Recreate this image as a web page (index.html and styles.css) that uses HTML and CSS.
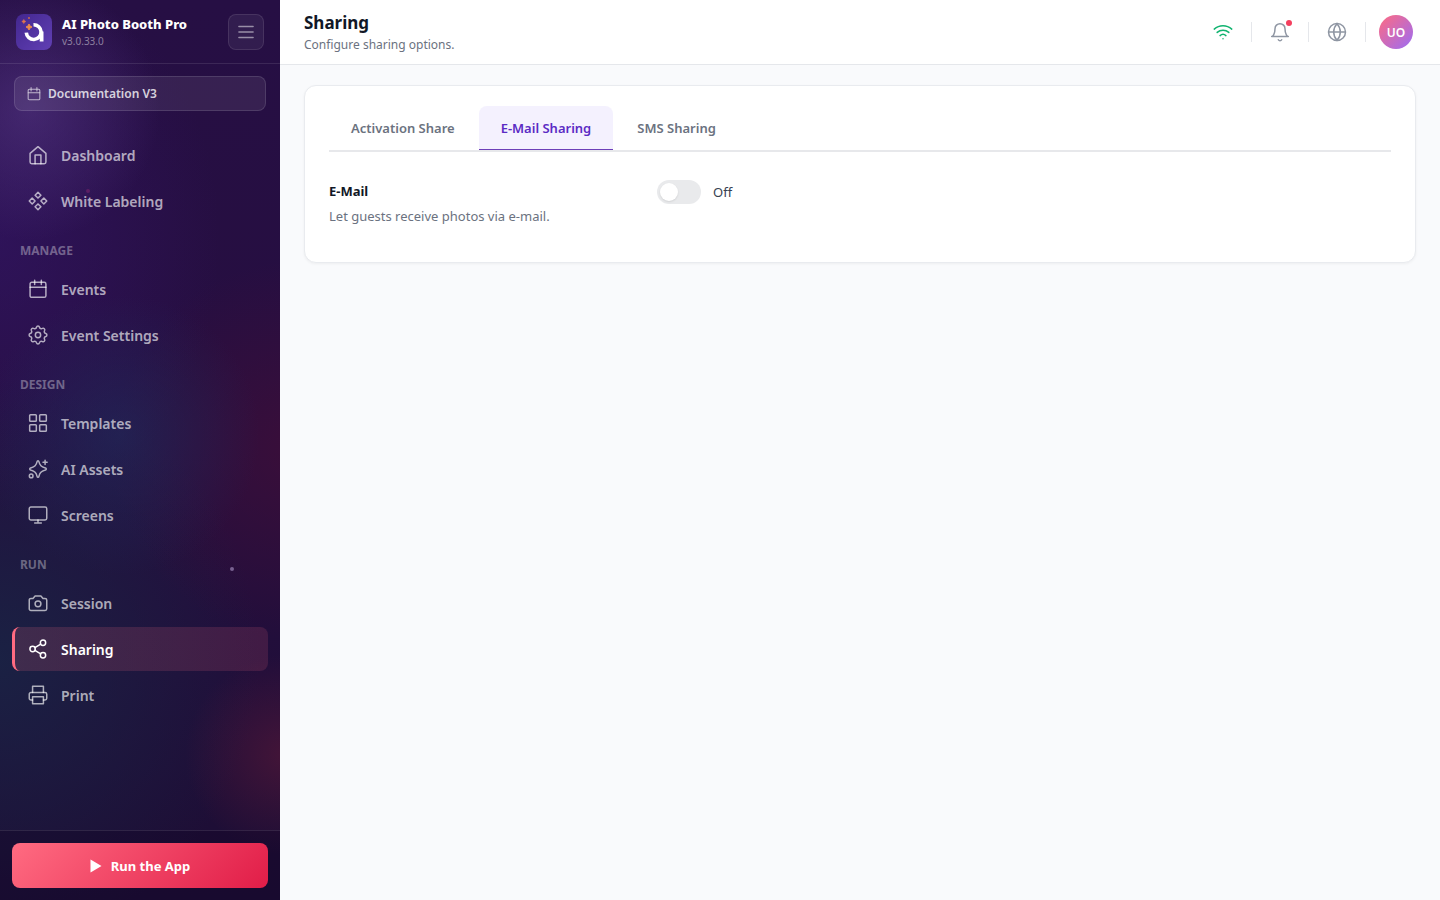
FILE: index.html
```html
<!DOCTYPE html>
<html lang="en">
<head>
    <meta charset="UTF-8">
    <meta name="viewport" content="width=device-width, initial-scale=1.0">
    <title>Sharing - AI Photo Booth Pro</title>
    <link rel="stylesheet" href="styles.css">
</head>
<body>
    <aside class="sidebar">
        <span class="particle particle-pink"></span>
        <span class="particle particle-white"></span>

        <div class="brand">
            <svg class="brand-logo" viewBox="0 0 36 36" aria-hidden="true">
                <defs>
                    <linearGradient id="logo-bg" x1="0" y1="0" x2="1" y2="1">
                        <stop offset="0" stop-color="#43278f"/>
                        <stop offset="1" stop-color="#6140b4"/>
                    </linearGradient>
                </defs>
                <rect width="36" height="36" rx="8" fill="url(#logo-bg)"/>
                <path d="M17.500 10.700A7.400 7.400 0 1 1 10.300 18.600" fill="none" stroke="#fff" stroke-width="3.600"/>
                <path d="M25.600 17.500V27.500" fill="none" stroke="#fff" stroke-width="3.800"/>
                <path d="M13 10l1 2 2 1-2 1-1 2-1-2-2-1 2-1z" fill="#ec8a4c" stroke="#ec8a4c"/>
                <path d="M7.800 5.500l.700 1.300 1.300.700-1.300.700-.700 1.300-.700-1.300-1.300-.700 1.300-.700z" fill="#e0764c" stroke="#e0764c" stroke-width=".6"/>
                <circle cx="13" cy="4" r="1.100" fill="#c0654f"/>
            </svg>
            <div class="brand-text">
                <div class="brand-name">AI Photo Booth Pro</div>
                <div class="brand-version">v3.0.33.0</div>
            </div>
            <button class="menu-btn" type="button" aria-label="Toggle menu">
                <svg class="icon" viewBox="0 0 24 24"><path d="M3.500 5.500h17M3.500 12h17M3.500 18.500h17"/></svg>
            </button>
        </div>

        <button class="event-chip" type="button">
            <svg class="icon" viewBox="0 0 24 24"><rect x="2" y="4" width="20" height="18" rx="2"/><path d="M7 1v6M17 1v6M2 10h20"/></svg>
            Documentation V3
        </button>

        <nav class="nav">
            <a class="nav-item" href="#">
                <svg class="icon" viewBox="0 0 24 24"><path d="M2.500 10V20.500a2 2 0 0 0 2 2h15a2 2 0 0 0 2-2V10L12 2z"/><path d="M8.500 22.500V12h7v10.500"/></svg>
                Dashboard
            </a>
            <a class="nav-item" href="#">
                <svg class="icon" viewBox="0 0 24 24"><path d="M12 1.500l3.500 3.500L12 8.500 8.500 5zM12 15.500l3.500 3.500-3.500 3.500L8.500 19zM5 8.500L8.500 12 5 15.500 1.500 12zM19 8.500l3.500 3.500-3.500 3.500-3.500-3.500z"/></svg>
                White Labeling
            </a>

            <div class="nav-label">Manage</div>
            <a class="nav-item" href="#">
                <svg class="icon" viewBox="0 0 24 24"><rect x="2.500" y="4" width="19" height="18" rx="2"/><path d="M8 1.500v5M16 1.500v5M2.500 10h19"/></svg>
                Events
            </a>
            <a class="nav-item" href="#">
                <svg class="icon" viewBox="0 0 24 24"><circle cx="12" cy="12" r="3.200"/><path d="M10.190 2.670A1.900 1.900 0 0 1 13.810 2.670A2.300 2.300 0 0 0 17.310 4.120A1.900 1.900 0 0 1 19.880 6.690A2.300 2.300 0 0 0 21.330 10.190A1.900 1.900 0 0 1 21.330 13.810A2.300 2.300 0 0 0 19.880 17.310A1.900 1.900 0 0 1 17.310 19.880A2.300 2.300 0 0 0 13.810 21.330A1.900 1.900 0 0 1 10.190 21.330A2.300 2.300 0 0 0 6.690 19.880A1.900 1.900 0 0 1 4.120 17.310A2.300 2.300 0 0 0 2.670 13.810A1.900 1.900 0 0 1 2.670 10.190A2.300 2.300 0 0 0 4.120 6.690A1.900 1.900 0 0 1 6.690 4.120A2.300 2.300 0 0 0 10.190 2.670z"/></svg>
                Event Settings
            </a>

            <div class="nav-label">Design</div>
            <a class="nav-item" href="#">
                <svg class="icon" viewBox="0 0 24 24"><rect x="2" y="2" width="8" height="8" rx="1"/><rect x="14" y="2" width="8" height="8" rx="1"/><rect x="2" y="14" width="8" height="8" rx="1"/><rect x="14" y="14" width="8" height="8" rx="1"/></svg>
                Templates
            </a>
            <a class="nav-item" href="#">
                <svg class="icon" viewBox="0 0 24 24"><path d="M12 2c.800 0 1 .600 1.200 1.500.900 4.200 2.400 5.900 6.800 7 1 .300 2 .500 2 1.500s-1 1.200-2 1.500c-4.400 1.100-5.900 2.800-6.800 7-.200.900-.400 1.500-1.200 1.500s-1-.600-1.200-1.500c-.900-4.200-2.400-5.900-6.800-7-1-.300-2-.500-2-1.500s1-1.200 2-1.500c4.400-1.100 5.900-2.800 6.800-7C11 2.600 11.200 2 12 2z"/><path d="M20.500 1.500v5M18 4h5"/><circle cx="3.800" cy="20.300" r="2.200"/></svg>
                AI Assets
            </a>
            <a class="nav-item" href="#">
                <svg class="icon" viewBox="0 0 24 24"><rect x="1.500" y="2.500" width="21" height="15.500" rx="2"/><path d="M12 18v3.500M8 21.500h8"/></svg>
                Screens
            </a>

            <div class="nav-label">Run</div>
            <a class="nav-item" href="#">
                <svg class="icon" viewBox="0 0 24 24"><path d="M8.500 3.500h7L18 6.500h2.500a2 2 0 0 1 2 2V19a2 2 0 0 1-2 2h-17a2 2 0 0 1-2-2V8.500a2 2 0 0 1 2-2H6z"/><circle cx="12" cy="13" r="3.500"/></svg>
                Session
            </a>
            <a class="nav-item active" href="#">
                <svg class="icon" viewBox="0 0 24 24"><circle cx="18" cy="4.500" r="3.200"/><circle cx="5.500" cy="12" r="3.200"/><circle cx="18" cy="19.500" r="3.200"/><path d="M8.300 10.400l6.900-4.200M8.300 13.600l6.900 4.200"/></svg>
                Sharing
            </a>
            <a class="nav-item" href="#">
                <svg class="icon" viewBox="0 0 24 24"><path d="M5.500 9V1.500h13V9"/><path d="M5.500 18h-2a2 2 0 0 1-2-2v-5a2 2 0 0 1 2-2h17a2 2 0 0 1 2 2v5a2 2 0 0 1-2 2h-2"/><rect x="5.500" y="14" width="13" height="8.500"/></svg>
                Print
            </a>
        </nav>

        <div class="sidebar-footer">
            <button class="run-btn" type="button">
                <svg class="play" viewBox="0 0 12 14" aria-hidden="true"><path d="M.500.500l11 6.500-11 6.500z"/></svg>
                Run the App
            </button>
        </div>
    </aside>

    <div class="page">
        <header class="topbar">
            <div class="topbar-title">
                <h1>Sharing</h1>
                <p>Configure sharing options.</p>
            </div>
            <div class="topbar-actions">
                <button class="action wifi" type="button" aria-label="Connection">
                    <svg class="icon" viewBox="0 0 24 24"><path d="M1.500 8.500a15.500 15.500 0 0 1 21 0M5 12.500a10.500 10.500 0 0 1 14 0M8.500 16.300a5.300 5.300 0 0 1 7 0M12 20h.01"/></svg>
                </button>
                <span class="divider"></span>
                <button class="action" type="button" aria-label="Notifications">
                    <svg class="icon" viewBox="0 0 24 24"><path d="M18 8a6 6 0 0 0-12 0c0 7-3 9.500-4 9.500h20c-1 0-4-2.500-4-9.500M10 21.300a2.300 2.300 0 0 0 4 0"/></svg>
                    <span class="badge"></span>
                </button>
                <span class="divider"></span>
                <button class="action" type="button" aria-label="Language">
                    <svg class="icon" viewBox="0 0 24 24"><circle cx="12" cy="12" r="10.200"/><path d="M2 12h20M12 2c5.300 5.700 5.300 14.300 0 20M12 2c-5.300 5.700-5.300 14.300 0 20"/></svg>
                </button>
                <span class="divider"></span>
                <button class="avatar" type="button">UO</button>
            </div>
        </header>

        <main class="content">
            <section class="card">
                <div class="tabs" role="tablist">
                    <button class="tab" type="button" role="tab">Activation Share</button>
                    <button class="tab active" type="button" role="tab" aria-selected="true">E-Mail Sharing</button>
                    <button class="tab" type="button" role="tab">SMS Sharing</button>
                </div>

                <div class="setting">
                    <div class="setting-info">
                        <h2 id="email-title">E-Mail</h2>
                        <p>Let guests receive photos via e-mail.</p>
                    </div>
                    <div class="setting-control">
                        <input class="toggle" type="checkbox" id="email-toggle" aria-labelledby="email-title">
                        <label for="email-toggle">Off</label>
                    </div>
                </div>
            </section>
        </main>
    </div>
</body>
</html>
```

FILE: styles.css
```css
* {
    box-sizing: border-box;
}

body {
    margin: 0;
    min-height: 100vh;
    display: flex;
    font-family: "Noto Sans", "Open Sans", sans-serif;
    font-size: 14px;
    color: #374151;
    background: #f9fafc;
}

button {
    font-family: inherit;
    cursor: pointer;
}

h1, h2, p {
    margin: 0;
}

.icon {
    width: 20px;
    height: 20px;
    flex-shrink: 0;
    fill: none;
    stroke: currentColor;
    stroke-width: 1.8;
    stroke-linecap: round;
    stroke-linejoin: round;
}

/* Sidebar */
.sidebar {
    position: relative;
    width: 280px;
    flex-shrink: 0;
    display: flex;
    flex-direction: column;
    background:
        radial-gradient(circle at 30px 110px, rgba(98, 66, 150, 0.45), transparent 130px),
        radial-gradient(circle at 285px 755px, rgba(110, 28, 56, 0.45), transparent 100px),
        radial-gradient(circle at 120px 435px, rgba(32, 44, 92, 0.6), transparent 140px),
        radial-gradient(circle at 300px 450px, rgba(74, 14, 52, 0.55), transparent 190px),
        radial-gradient(ellipse 260px 280px at 0 660px, rgba(26, 34, 68, 0.95), transparent),
        radial-gradient(ellipse 220px 280px at 0 240px, rgba(52, 22, 104, 0.6), transparent),
        linear-gradient(180deg, #260f44, #260e40 50%, #1c0e34);
}

.particle {
    position: absolute;
    width: 4px;
    height: 4px;
    border-radius: 50%;
}

.particle-pink {
    left: 86px;
    top: 189px;
    background: rgba(190, 50, 130, 0.3);
}

.particle-white {
    left: 230px;
    top: 567px;
    background: rgba(200, 180, 230, 0.5);
}

.brand {
    display: flex;
    align-items: center;
    gap: 10px;
    height: 64px;
    padding: 0 16px;
    border-bottom: 1px solid rgba(255, 255, 255, 0.1);
}

.brand-logo {
    width: 36px;
    height: 36px;
}

.brand-text {
    flex: 1;
}

.brand-name {
    font-size: 13px;
    font-weight: 800;
    line-height: 18px;
    color: #fff;
    white-space: nowrap;
}

.brand-version {
    font-size: 10px;
    line-height: 16px;
    color: rgba(255, 255, 255, 0.45);
}

.menu-btn {
    display: flex;
    align-items: center;
    justify-content: center;
    width: 36px;
    height: 36px;
    padding: 0;
    border: 1px solid rgba(255, 255, 255, 0.1);
    border-radius: 8px;
    background: rgba(255, 255, 255, 0.06);
    color: rgba(255, 255, 255, 0.5);
}

.event-chip {
    display: flex;
    align-items: center;
    gap: 7px;
    height: 35px;
    margin: 12px 14px 0;
    padding: 0 12px;
    border: 1px solid rgba(255, 255, 255, 0.12);
    border-radius: 8px;
    background: rgba(255, 255, 255, 0.08);
    color: rgba(255, 255, 255, 0.8);
    font-size: 12px;
    font-weight: 600;
}

.event-chip .icon {
    width: 14px;
    height: 14px;
    opacity: 0.8;
}

.nav {
    flex: 1;
    display: flex;
    flex-direction: column;
    gap: 2px;
    padding: 22px 12px;
}

.nav-item {
    display: flex;
    align-items: center;
    gap: 13px;
    height: 44px;
    padding: 0 13px;
    border-left: 3px solid transparent;
    border-radius: 8px;
    color: rgba(255, 255, 255, 0.65);
    font-size: 14px;
    font-weight: 600;
    text-decoration: none;
}

.nav-item.active {
    border-left-color: #ff6b81;
    background: linear-gradient(90deg, rgba(255, 107, 129, 0.16), rgba(255, 107, 129, 0.14));
    color: #fff;
}

.nav-label {
    padding: 17px 8px 5px;
    font-size: 12px;
    font-weight: 700;
    line-height: 18px;
    text-transform: uppercase;
    color: rgba(255, 255, 255, 0.35);
}

.sidebar-footer {
    padding: 12px;
    border-top: 1px solid rgba(255, 255, 255, 0.1);
    background: rgba(20, 6, 40, 0.4);
}

.run-btn {
    display: flex;
    align-items: center;
    justify-content: center;
    gap: 9px;
    width: 100%;
    height: 45px;
    border: 0;
    border-radius: 8px;
    background: linear-gradient(135deg, #ff6b81, #e11d48);
    color: #fff;
    font-size: 13px;
    font-weight: 700;
}

.play {
    width: 12px;
    height: 14px;
    fill: #fff;
}

/* Page */
.page {
    flex: 1;
    min-width: 0;
}

.topbar {
    display: flex;
    align-items: center;
    justify-content: space-between;
    height: 65px;
    padding: 0 27px 0 24px;
    border-bottom: 1px solid #e5e7eb;
    background: #fff;
}

.topbar-title {
    padding-top: 2px;
}

.topbar h1 {
    font-size: 17px;
    font-weight: 700;
    line-height: 24px;
    color: #111827;
}

.topbar p {
    font-size: 12px;
    line-height: 20px;
    color: #6b7280;
}

.topbar-actions {
    display: flex;
    align-items: center;
    gap: 10px;
}

.action {
    position: relative;
    display: flex;
    align-items: center;
    justify-content: center;
    width: 36px;
    height: 36px;
    padding: 0;
    border: 0;
    background: none;
    color: #8f96a3;
}

.action.wifi {
    color: #10b36f;
}

.badge {
    position: absolute;
    top: 6px;
    right: 6px;
    width: 6px;
    height: 6px;
    border-radius: 50%;
    background: #f43f5e;
}

.divider {
    width: 1px;
    height: 20px;
    background: #e5e7eb;
}

.avatar {
    width: 34px;
    height: 34px;
    margin-left: 3px;
    padding: 0;
    border: 0;
    border-radius: 50%;
    background: linear-gradient(135deg, #ff6b81, #9b6cf5);
    color: #fff;
    font-size: 12px;
    font-weight: 600;
}

.content {
    padding: 20px 24px;
}

.card {
    padding: 20px 24px 34px;
    border: 1px solid #e9ebef;
    border-radius: 12px;
    background: #fff;
    box-shadow: 0 1px 3px rgba(0, 0, 0, 0.05);
}

.tabs {
    display: flex;
    gap: 2px;
    border-bottom: 2px solid #e7e8eb;
}

.tab {
    height: 44px;
    padding: 0 22px;
    border: 0;
    border-radius: 8px 8px 0 0;
    background: none;
    color: #6b7280;
    font-size: 13px;
    font-weight: 600;
}

.tab.active {
    background: linear-gradient(#6d3fb8, #6d3fb8) bottom / 100% 1px no-repeat #f4f1fe;
    color: #5b2bc4;
}

.setting {
    display: grid;
    grid-template-columns: 304px 1fr;
    gap: 24px;
    padding-top: 28px;
}

.setting h2 {
    font-size: 13px;
    font-weight: 700;
    line-height: 22px;
    color: #111827;
}

.setting p {
    padding-top: 2px;
    font-size: 13px;
    line-height: 24px;
    color: #6b7280;
}

.setting-control {
    display: flex;
    align-items: center;
    gap: 12px;
    height: 24px;
}

.toggle {
    appearance: none;
    width: 44px;
    height: 24px;
    margin: 0;
    border-radius: 12px;
    background: #e9eaec;
    cursor: pointer;
}

.toggle::before {
    content: "";
    display: block;
    width: 18px;
    height: 18px;
    margin: 3px;
    border-radius: 50%;
    background: #fff;
    box-shadow: 0 1px 2px rgba(0, 0, 0, 0.1);
}

.toggle:checked {
    background: #5b2bc4;
}

.toggle:checked::before {
    margin-left: 23px;
}

.setting-control label {
    font-size: 13px;
}
```
